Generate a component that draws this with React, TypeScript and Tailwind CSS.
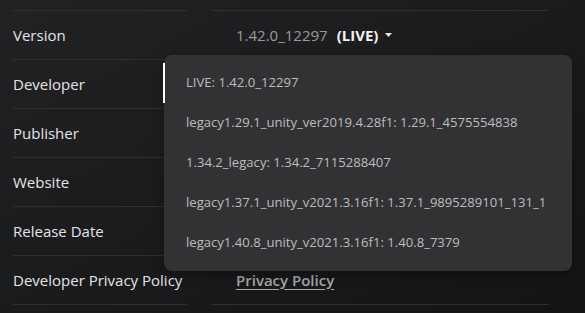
import type { ReactNode } from "react";

const rows: { label: string; value?: ReactNode }[] = [
  {
    label: "Version",
    value: (
      <span className="flex items-center">
        <span className="text-[#9a9a9c]">1.42.0_12297</span>
        <span className="ml-[9px] font-bold text-[#f2f2f2]">(LIVE)</span>
        <svg className="ml-[7px]" width="7" height="4" viewBox="0 0 7 4">
          <path d="M0 0h7L3.5 4z" fill="#e8e8e8" />
        </svg>
      </span>
    ),
  },
  { label: "Developer" },
  { label: "Publisher" },
  { label: "Website" },
  { label: "Release Date" },
  {
    label: "Developer Privacy Policy",
    value: <span className="font-semibold text-[#a8a8aa] underline underline-offset-[3px]">Privacy Policy</span>,
  },
];

const versions = [
  "LIVE: 1.42.0_12297",
  "legacy1.29.1_unity_ver2019.4.28f1: 1.29.1_4575554838",
  "1.34.2_legacy: 1.34.2_7115288407",
  "legacy1.37.1_unity_v2021.3.16f1: 1.37.1_9895289101_131_1",
  "legacy1.40.8_unity_v2021.3.16f1: 1.40.8_7379",
];

export default function App() {
  return (
    <div
      className="relative h-[313px] w-[585px] overflow-hidden bg-gradient-to-br from-[#222225] to-[#131416] pt-[10px]"
      style={{ fontFamily: '"Open Sans", "Noto Sans", sans-serif' }}
    >
      <div className="ml-[13px] grid w-[536px] grid-cols-[174px_338px] gap-x-[24px]">
        {rows.map((row) => (
          <div key={row.label} className="contents">
            <div className="flex h-[49px] items-center border-t border-[#2f2f32] text-[15px] text-[#e4e4e6]">
              {row.label}
            </div>
            <div className="flex h-[49px] items-center border-t border-[#2f2f32] pl-[25px] text-[15px]">
              {row.value}
            </div>
          </div>
        ))}
        <div className="border-t border-[#2f2f32]" />
        <div className="border-t border-[#2f2f32]" />
      </div>

      <div className="absolute left-[164px] top-[55px] w-[408px] rounded-lg bg-[#323235] py-[8px] shadow-[0_4px_12px_rgba(0,0,0,0.35)]">
        {versions.map((v) => (
          <div
            key={v}
            className="flex h-[40px] items-center overflow-hidden whitespace-nowrap pl-[22px] pr-[24px] text-[13.1px] text-[#bdbdbf]"
          >
            {v}
          </div>
        ))}
      </div>
      <div className="absolute left-[163px] top-[63px] h-[40px] w-[2px] bg-white" />
    </div>
  );
}
